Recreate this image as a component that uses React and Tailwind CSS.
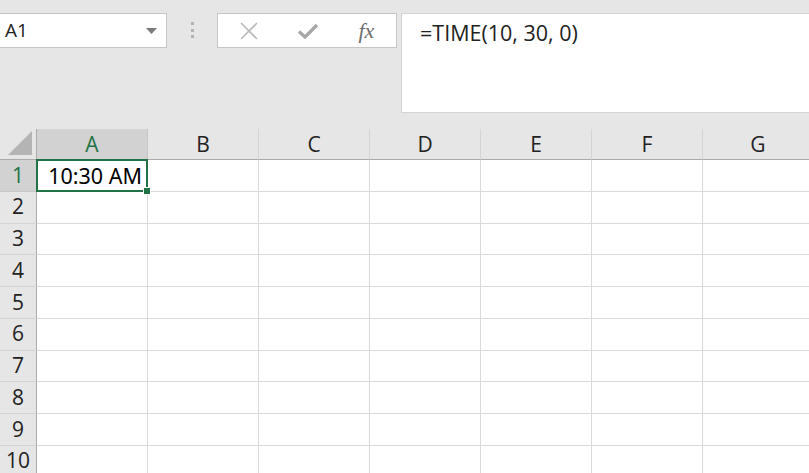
const columns = ["A", "B", "C", "D", "E", "F", "G"];
const rows = [1, 2, 3, 4, 5, 6, 7, 8, 9, 10];

function NameBox() {
  return (
    <div className="flex h-[35px] w-[167px] items-center justify-between border border-l-0 border-[#c6c6c6] bg-white pl-[5px] pr-[9px]">
      <span className="text-[19px] leading-none text-[#222]">A1</span>
      <svg width="11" height="6" viewBox="0 0 11 6">
        <polygon points="0,0 11,0 5.5,6" fill="#7a7a7a" />
      </svg>
    </div>
  );
}

function FormulaButtons() {
  return (
    <div className="flex h-[35px] w-[180px] items-center border border-[#c6c6c6] bg-white">
      <div className="flex w-[60px] justify-center pl-[2px]">
        <svg width="20" height="20" viewBox="0 0 20 20">
          <path d="M2 2 L18 18 M18 2 L2 18" stroke="#b9b9b9" strokeWidth="1.6" fill="none" />
        </svg>
      </div>
      <div className="flex w-[60px] justify-center pl-[2px]">
        <svg width="22" height="18" viewBox="0 0 22 18">
          <path d="M2 9.5 L8 15 L20 3" stroke="#a6a6a6" strokeWidth="3.2" fill="none" strokeLinejoin="round" />
        </svg>
      </div>
      <div className="flex w-[60px] justify-center">
        <span className="font-['Liberation_Serif',serif] text-[22px] italic leading-none text-[#6d6d6d]">fx</span>
      </div>
    </div>
  );
}

export default function App() {
  return (
    <div className="h-[473px] w-[809px] overflow-hidden bg-[#e6e6e6] font-['Open_Sans',sans-serif]">
      <div className="flex h-[129px] items-start pt-[13px]">
        <NameBox />
        <div className="flex w-[50px] flex-col items-center gap-[3.5px] pt-[9px]">
          <span className="h-[3px] w-[3px] bg-[#b3b3b3]" />
          <span className="h-[3px] w-[3px] bg-[#b3b3b3]" />
          <span className="h-[3px] w-[3px] bg-[#b3b3b3]" />
        </div>
        <FormulaButtons />
        <div className="ml-[4px] h-[100px] flex-1 border border-r-0 border-[#d4d4d4] bg-white pl-[18px] pt-[3px]">
          <span className="text-[21.5px] text-[#222]">=TIME(10, 30, 0)</span>
        </div>
      </div>

      <div className="grid grid-cols-[37px_repeat(7,111px)] grid-rows-[31px_repeat(10,31.75px)]">
        <div className="relative border-b border-r border-[#ababab] bg-[#e6e6e6]">
          <svg className="absolute bottom-[4px] right-[4px]" width="24" height="24" viewBox="0 0 24 24">
            <polygon points="24,0 24,24 0,24" fill="#b4b4b4" />
          </svg>
        </div>
        {columns.map((c) => (
          <div
            key={c}
            className={
              c === "A"
                ? "flex items-center justify-center border-b border-r border-b-[#ababab] border-r-[#c6c6c6] bg-[#d2d2d2] pt-[1px] text-[21px] text-[#217346]"
                : "flex items-center justify-center border-b border-r border-b-[#ababab] border-r-[#d4d4d4] bg-[#e6e6e6] pt-[1px] text-[21px] text-[#222]"
            }
          >
            {c}
          </div>
        ))}

        {rows.map((r) => [
          <div
            key={"h" + r}
            className={
              r === 1
                ? "flex items-center justify-center border-b border-r border-b-[#c6c6c6] border-r-[#ababab] bg-[#d2d2d2] text-[21px] text-[#217346]"
                : "flex items-center justify-center border-b border-r border-b-[#d4d4d4] border-r-[#ababab] bg-[#e6e6e6] text-[21px] text-[#222]"
            }
          >
            {r}
          </div>,
          ...columns.map((c) => (
            <div key={c + r} className="relative border-b border-r border-[#dadada] bg-white">
              {c === "A" && r === 1 && (
                <>
                  <div className="absolute inset-[-1px] z-10 border-2 border-[#217346]" />
                  <span className="absolute right-[5px] top-[1px] font-['Noto_Sans',sans-serif] text-[21.5px] leading-[30px] text-black">
                    10:30 AM
                  </span>
                  <div className="absolute bottom-[-4px] right-[-4px] z-20 h-[8px] w-[8px] border border-white bg-[#217346]" />
                </>
              )}
            </div>
          )),
        ])}
      </div>
    </div>
  );
}
